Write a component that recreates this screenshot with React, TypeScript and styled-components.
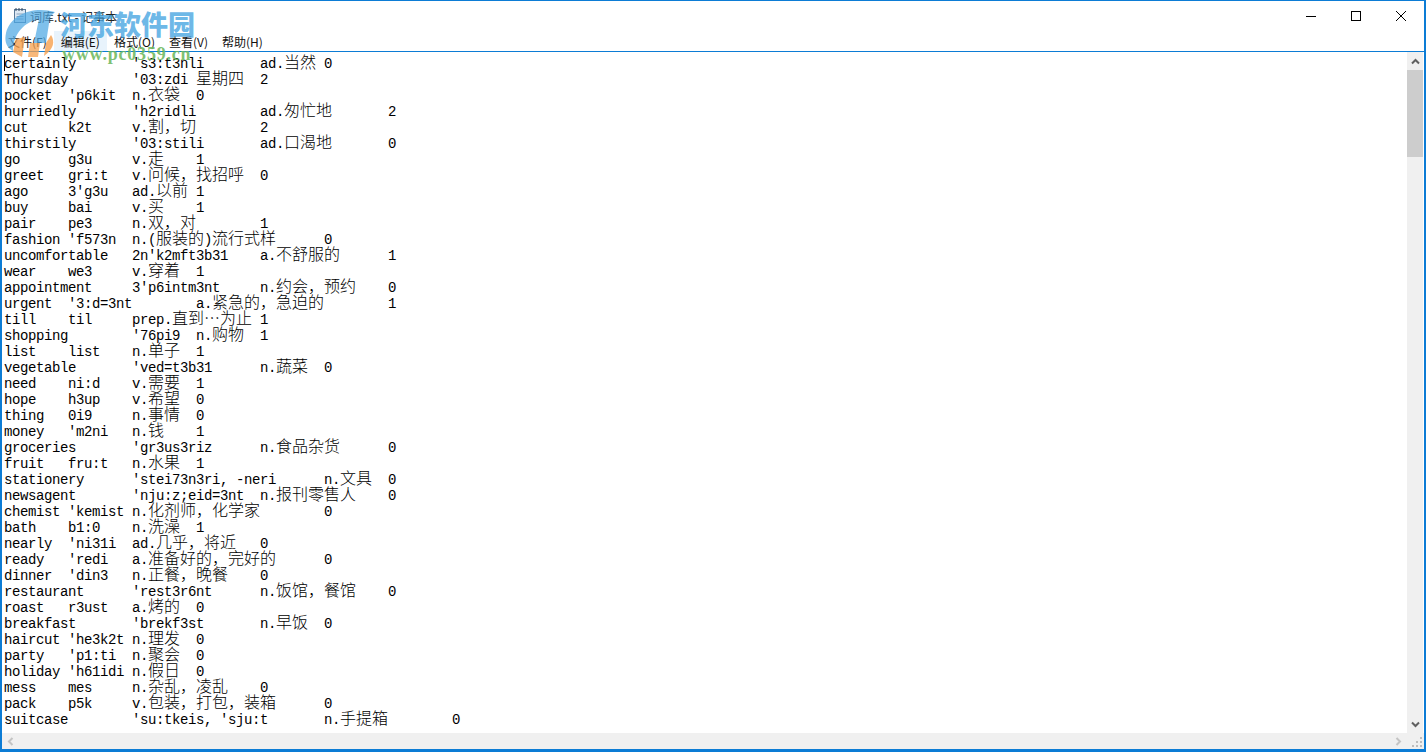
import React from 'react'
import styled, { createGlobalStyle } from 'styled-components'

const LINES = [
  "certainly\t's3:t3nli\tad.当然\t0",
  "Thursday\t'03:zdi\t星期四\t2",
  "pocket\t'p6kit\tn.衣袋\t0",
  "hurriedly\t'h2ridli\tad.匆忙地\t2",
  'cut\tk2t\tv.割，切\t2',
  "thirstily\t'03:stili\tad.口渴地\t0",
  'go\tg3u\tv.走\t1',
  'greet\tgri:t\tv.问候，找招呼\t0',
  "ago\t3'g3u\tad.以前\t1",
  'buy\tbai\tv.买\t1',
  'pair\tpe3\tn.双，对\t1',
  "fashion\t'f573n\tn.(服装的)流行式样\t0",
  "uncomfortable\t2n'k2mft3b31\ta.不舒服的\t1",
  'wear\twe3\tv.穿着\t1',
  "appointment\t3'p6intm3nt\tn.约会，预约\t0",
  "urgent\t'3:d=3nt\ta.紧急的，急迫的\t1",
  'till\ttil\tprep.直到…为止\t1',
  "shopping\t'76pi9\tn.购物\t1",
  'list\tlist\tn.单子\t1',
  "vegetable\t'ved=t3b31\tn.蔬菜\t0",
  'need\tni:d\tv.需要\t1',
  'hope\th3up\tv.希望\t0',
  'thing\t0i9\tn.事情\t0',
  "money\t'm2ni\tn.钱\t1",
  "groceries\t'gr3us3riz\tn.食品杂货\t0",
  'fruit\tfru:t\tn.水果\t1',
  "stationery\t'stei73n3ri, -neri\tn.文具\t0",
  "newsagent\t'nju:z;eid=3nt\tn.报刊零售人\t0",
  "chemist\t'kemist\tn.化剂师，化学家\t0",
  'bath\tb1:0\tn.洗澡\t1',
  "nearly\t'ni31i\tad.几乎，将近\t0",
  "ready\t'redi\ta.准备好的，完好的\t0",
  "dinner\t'din3\tn.正餐，晚餐\t0",
  "restaurant\t'rest3r6nt\tn.饭馆，餐馆\t0",
  'roast\tr3ust\ta.烤的\t0',
  "breakfast\t'brekf3st\tn.早饭\t0",
  "haircut\t'he3k2t\tn.理发\t0",
  "party\t'p1:ti\tn.聚会\t0",
  "holiday\t'h61idi\tn.假日\t0",
  'mess\tmes\tn.杂乱，凌乱\t0',
  'pack\tp5k\tv.包装，打包，装箱\t0',
  "suitcase\t'su:tkeis, 'sju:t\tn.手提箱\t0",
]

const MENUS = ['文件(F)', '编辑(E)', '格式(O)', '查看(V)', '帮助(H)']

const GlobalStyle = createGlobalStyle`
  html, body {
    margin: 0;
    height: 100%;
    overflow: hidden;
    background: #fff;
  }
`

// CJK runs are set larger than the latin so they take two latin cells
const renderLine = (line: string) =>
  line
    .split(/([\u2026\u3000-\u9fff\uff00-\uffef]+)/)
    .map((part, i) => (i % 2 === 1 ? <Han key={i}>{part}</Han> : part))

export default function App() {
  return (
    <Window>
      <GlobalStyle />
      <TitleBar>
        <TitleLeft>
          <NotepadIcon />
          <TitleText>词库.txt - 记事本</TitleText>
        </TitleLeft>
        <WindowButtons>
          <WindowButton>
            <svg width="10" height="10" viewBox="0 0 10 10">
              <path d="M0 5.5h10" stroke="#000" strokeWidth="1" />
            </svg>
          </WindowButton>
          <WindowButton>
            <svg width="10" height="10" viewBox="0 0 10 10">
              <rect x="0.5" y="0.5" width="9" height="9" fill="none" stroke="#000" />
            </svg>
          </WindowButton>
          <WindowButton>
            <svg width="10" height="10" viewBox="0 0 10 10">
              <path d="M0 0l10 10M10 0L0 10" stroke="#000" strokeWidth="1" />
            </svg>
          </WindowButton>
        </WindowButtons>
      </TitleBar>
      <MenuBar>
        {MENUS.map((m, i) => (
          <MenuItem key={m} $active={i === 1}>
            {m}
          </MenuItem>
        ))}
      </MenuBar>
      <EditorRow>
        <TextPane>
          <Caret />
          {LINES.map((l, i) => (
            <TextLine key={i}>{renderLine(l)}</TextLine>
          ))}
        </TextPane>
        <VScroll>
          <ArrowButton>
            <svg width="9" height="7" viewBox="0 0 9 7">
              <path d="M1 5.5l3.5-3.5L8 5.5" fill="none" stroke="#606060" strokeWidth="2" />
            </svg>
          </ArrowButton>
          <VThumb />
          <VTrack />
          <ArrowButton>
            <svg width="9" height="7" viewBox="0 0 9 7">
              <path d="M1 1.5L4.5 5 8 1.5" fill="none" stroke="#606060" strokeWidth="2" />
            </svg>
          </ArrowButton>
        </VScroll>
      </EditorRow>
      <HScroll>
        <HArrow>
          <svg width="7" height="9" viewBox="0 0 7 9">
            <path d="M5.5 1L2 4.5 5.5 8" fill="none" stroke="#c4c4c4" strokeWidth="2" />
          </svg>
        </HArrow>
        <HTrack />
        <HArrow>
          <svg width="7" height="9" viewBox="0 0 7 9">
            <path d="M1.5 1L5 4.5 1.5 8" fill="none" stroke="#c4c4c4" strokeWidth="2" />
          </svg>
        </HArrow>
        <Corner>
          <svg width="12" height="12" viewBox="0 0 12 12" fill="#bdbdbd">
            <rect x="8" y="0" width="2" height="2" />
            <rect x="4" y="4" width="2" height="2" />
            <rect x="8" y="4" width="2" height="2" />
            <rect x="0" y="8" width="2" height="2" />
            <rect x="4" y="8" width="2" height="2" />
            <rect x="8" y="8" width="2" height="2" />
          </svg>
        </Corner>
      </HScroll>
      <Watermark>
        <WatermarkLogo viewBox="0 0 56 48">
          <path
            d="M50 3C30-3 6 4 1 24c-2 9 1 15 7 18C8 28 16 14 34 10l-5 24h12l4-26z"
            fill="#4ea8e3"
            opacity="0.72"
          />
          <path d="M11 30l-3 13 9 5 3-20z" fill="#f6a04d" opacity="0.8" />
          <path d="M25 34l-2 14h10l2-14z" fill="#f6a04d" opacity="0.75" />
          <path d="M46 26c4 6 3 14-7 21l2-13z" fill="#f6a04d" opacity="0.8" />
        </WatermarkLogo>
        <WatermarkTitle>河东软件园</WatermarkTitle>
        <WatermarkUrl>www.pc0359.cn</WatermarkUrl>
      </Watermark>
    </Window>
  )
}

const NotepadIcon = () => (
  <IconSvg viewBox="0 0 16 16">
    <rect x="2.5" y="1.5" width="11" height="13" fill="#dfe9f3" stroke="#5b7a99" />
    <path d="M4 0v3M7 0v3M10 0v3" stroke="#33475c" />
    <path d="M4.5 6h7M4.5 8.5h7M4.5 11h7" stroke="#8aa3bb" />
  </IconSvg>
)

const Window = styled.div`
  position: relative;
  box-sizing: border-box;
  width: 1426px;
  height: 752px;
  display: flex;
  flex-direction: column;
  background: #fff;
  border-style: solid;
  border-color: #0c7cd5;
  border-width: 1px 2px 3px 2px;
  overflow: hidden;
`

const TitleBar = styled.div`
  height: 30px;
  flex: none;
  display: flex;
  justify-content: space-between;
`

const TitleLeft = styled.div`
  display: flex;
  align-items: center;
  padding-left: 10px;
  gap: 2px;
`

const IconSvg = styled.svg`
  width: 16px;
  height: 16px;
`

const TitleText = styled.span`
  font: 12px 'Noto Sans CJK SC', 'Noto Sans', sans-serif;
  color: #222;
`

const WindowButtons = styled.div`
  display: flex;
  margin-right: 1px;
`

const WindowButton = styled.div`
  width: 45px;
  height: 30px;
  display: flex;
  align-items: center;
  justify-content: center;
`

const MenuBar = styled.div`
  height: 20px;
  flex: none;
  display: flex;
  align-items: stretch;
  margin-left: -1px;
  background: #fff;
`

const MenuItem = styled.div<{ $active?: boolean }>`
  display: flex;
  align-items: center;
  padding: 0 7px;
  font: 12px 'Noto Sans CJK SC', 'Noto Sans', sans-serif;
  color: #111;
  background: ${props => (props.$active ? '#e8f3fc' : 'transparent')};
`

const EditorRow = styled.div`
  flex: 1;
  min-height: 0;
  display: flex;
  border-top: 1px solid #0c7cd5;
`

const TextPane = styled.div`
  position: relative;
  flex: 1;
  min-width: 0;
  padding: 4px 0 0 2px;
  overflow: hidden;
  background: #fff;
`

const TextLine = styled.div`
  height: 16px;
  font: 14px/16px 'Liberation Mono', monospace;
  letter-spacing: -0.4px;
  color: #000;
  white-space: pre;
  tab-size: 8;
`

const Han = styled.span`
  font-family: 'Noto Sans CJK SC', sans-serif;
  font-size: 16px;
  font-weight: 300;
  letter-spacing: 0;
  line-height: 0;
`

const Caret = styled.div`
  position: absolute;
  left: 2px;
  top: 3px;
  width: 1px;
  height: 16px;
  background: #000;
`

const VScroll = styled.div`
  width: 16px;
  margin-right: 1px;
  flex: none;
  display: flex;
  flex-direction: column;
  background: #f0f0f0;
`

const ArrowButton = styled.div`
  height: 18px;
  flex: none;
  display: flex;
  align-items: center;
  justify-content: center;
`

const VThumb = styled.div`
  height: 87px;
  flex: none;
  background: #cdcdcd;
`

const VTrack = styled.div`
  flex: 1;
`

const HScroll = styled.div`
  height: 16px;
  flex: none;
  display: flex;
  background: #f0f0f0;
`

const HArrow = styled.div`
  width: 17px;
  flex: none;
  display: flex;
  align-items: center;
  justify-content: center;
`

const HTrack = styled.div`
  flex: 1;
`

const Corner = styled.div`
  width: 17px;
  flex: none;
  display: flex;
  align-items: flex-end;
  justify-content: flex-end;
`

const Watermark = styled.div`
  position: absolute;
  left: 3px;
  top: 8px;
  width: 200px;
  height: 52px;
  pointer-events: none;
`

const WatermarkLogo = styled.svg`
  position: absolute;
  left: 0;
  top: 0;
  width: 56px;
  height: 48px;
`

const WatermarkTitle = styled.div`
  position: absolute;
  left: 55px;
  top: -3px;
  font: 900 27px/36px 'Noto Sans CJK SC', sans-serif;
  color: rgba(70, 165, 225, 0.8);
  white-space: nowrap;
`

const WatermarkUrl = styled.div`
  position: absolute;
  left: 57px;
  top: 36px;
  font: bold 18px/18px 'Liberation Serif', serif;
  letter-spacing: 0.8px;
  color: rgba(110, 185, 95, 0.9);
  white-space: nowrap;
`
